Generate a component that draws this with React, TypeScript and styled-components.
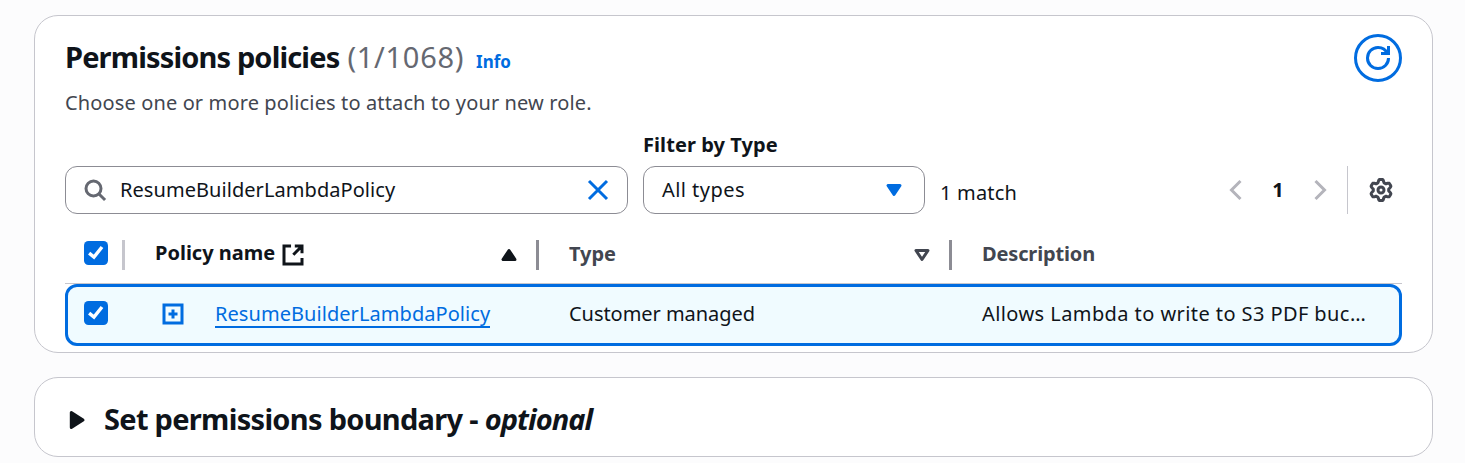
import React from "react";
import styled, { createGlobalStyle } from "styled-components";

const GlobalStyle = createGlobalStyle`
  *, *::before, *::after { box-sizing: border-box; }
  body {
    margin: 0;
    background: #fcfcfd;
    color: #0f141a;
    font-family: "Noto Sans", "Open Sans", sans-serif;
    font-size: 20px;
    line-height: 30px;
  }
`;

const Page = styled.main`
  display: flex;
  flex-direction: column;
  gap: 24px;
  height: 463px;
  padding: 15px 32px 6px 34px;
  overflow: hidden;
`;

const Card = styled.section<{ $height: number }>`
  flex: none;
  height: ${(p) => p.$height}px;
  padding: 0 30px;
  background: #fff;
  border: 1px solid #c6c6cd;
  border-radius: 24px;
`;

const Label = styled.span<{ $tracking?: number }>`
  white-space: nowrap;
  letter-spacing: ${(p) => p.$tracking ?? 0}px;
`;

const CardHeader = styled.header`
  display: flex;
  justify-content: space-between;
  align-items: flex-start;
  padding-top: 18px;
`;

const TitleRow = styled.div`
  display: flex;
  align-items: baseline;
  height: 48px;
`;

const Title = styled.h2`
  margin: 0;
  font-size: 29px;
  line-height: 46px;
  font-weight: 700;
  white-space: nowrap;
  letter-spacing: -0.85px;
`;

const Counter = styled.span`
  margin-left: 8px;
  color: #656871;
  font-size: 29px;
  line-height: 46px;
  white-space: nowrap;
  letter-spacing: 0.7px;
`;

const InfoLink = styled.a`
  margin-left: 12px;
  color: #006ce0;
  font-size: 17px;
  font-weight: 700;
`;

const Subtitle = styled.p`
  margin: 6px 0 0;
  color: #424650;
  white-space: nowrap;
  letter-spacing: 0.13px;
`;

const RoundButton = styled.button`
  display: grid;
  place-items: center;
  width: 48px;
  height: 48px;
  padding: 0;
  color: #006ce0;
  background: #fff;
  border: 3px solid #006ce0;
  border-radius: 50%;
`;

const Toolbar = styled.div`
  display: flex;
  align-items: flex-end;
  height: 96px;
`;

const Field = styled.div<{ $width: number }>`
  display: flex;
  align-items: center;
  width: ${(p) => p.$width}px;
  height: 48px;
  padding: 0 17px;
  border: 1px solid #8c8c94;
  border-radius: 12px;

  svg:last-child {
    margin-left: auto;
  }
`;

const SearchField = styled(Field)`
  margin-right: 15px;
  gap: 13px;
`;

const SelectField = styled(Field)`
  padding: 0 18px;
`;

const FilterGroup = styled.label`
  display: flex;
  flex-direction: column;
`;

const FilterLabel = styled.span`
  height: 36px;
  font-weight: 700;
  letter-spacing: 0.08px;
  white-space: nowrap;
`;

const MatchCount = styled.div`
  margin-left: 15px;
  height: 36px;
`;

const Pager = styled.nav`
  display: flex;
  align-items: center;
  margin-left: auto;
  height: 48px;
  color: #b4b4bb;
`;

const PageNumber = styled.span`
  width: 60px;
  color: #0f141a;
  font-weight: 700;
  text-align: center;
`;

const Preferences = styled.div`
  display: flex;
  align-items: center;
  height: 48px;
  margin-left: 15px;
  padding: 0 9px 0 21px;
  color: #424650;
  border-left: 1px solid #c6c6cd;
`;

const columns = "60px 414px 413px 1fr";

const HeadRow = styled.div`
  display: grid;
  grid-template-columns: ${columns};
  align-items: end;
  height: 70px;
  padding-bottom: 13px;
  border-bottom: 1px solid #c6c6cd;
  font-weight: 700;
`;

const HeadCell = styled.div<{ $divider?: string; $muted?: boolean; $inset?: number }>`
  display: flex;
  align-items: center;
  height: 30px;
  padding-left: ${(p) => p.$inset ?? 30}px;
  padding-right: 15px;
  color: ${(p) => (p.$muted ? "#424650" : "#0f141a")};
  border-right: ${(p) => (p.$divider ? `3px solid ${p.$divider}` : "none")};
`;

const HeadCheck = styled.span`
  padding-bottom: 4px;
`;

const HeadLabel = styled(Label)`
  padding-bottom: 2px;
`;

const NameLabel = styled(Label)`
  margin-right: 6px;
  padding-bottom: 4px;
`;

const SortIcon = styled.span`
  display: flex;
  margin-left: auto;
`;

const BodyRow = styled.div`
  display: grid;
  grid-template-columns: 57px 414px 413px 1fr;
  align-items: center;
  height: 62px;
  padding-bottom: 2px;
  background: #f0fbff;
  border: 3px solid #006ce0;
  border-radius: 12px;
`;

const BodyCell = styled.div<{ $inset?: number }>`
  display: flex;
  align-items: center;
  height: 30px;
  padding-left: ${(p) => p.$inset ?? 30}px;
`;

const BodyCheck = styled.span`
  padding-bottom: 2px;
`;

const ExpandIcon = styled.span`
  display: flex;
  margin-right: 30px;
  color: #006ce0;
`;

const PolicyLink = styled.a`
  height: 28px;
  line-height: 28px;
  color: #006ce0;
  border-bottom: 2px solid #006ce0;
  white-space: nowrap;
  letter-spacing: 0.06px;
`;

const Check = styled.span`
  display: block;
  width: 24px;
  height: 24px;
  background: #006ce0;
  border-radius: 4.5px;

  svg {
    display: block;
  }
`;

const Expander = styled.div`
  display: flex;
  align-items: center;
  height: 78px;
  padding-top: 5px;
`;

const BoundaryTitle = styled(Title)`
  margin-left: 15px;
  padding-bottom: 2px;
  letter-spacing: -0.7px;

  i {
    letter-spacing: -0.95px;
  }
`;

const Icon = ({ children, fill = "none" }: { children: React.ReactNode; fill?: string }) => (
  <svg width="24" height="24" viewBox="0 0 16 16" fill={fill} stroke="currentColor" strokeWidth="2">
    {children}
  </svg>
);

const Checkbox = () => (
  <Check role="checkbox" aria-checked="true">
    <svg width="24" height="24" viewBox="0 0 14 14" fill="none" stroke="#fff" strokeWidth="2">
      <polyline points="3,7.1 5.8,9.4 10.5,3.5" />
    </svg>
  </Check>
);

// Outline of a cog with six wide, rounded teeth, one of them pointing up.
const gearPoints = Array.from({ length: 120 }, (_, i) => {
  const angle = (i * Math.PI) / 60;
  const tooth = Math.max(-1, Math.min(1, -1.6 * Math.cos(6 * angle) + 0.2));
  const radius = 6.1 + 0.95 * tooth;
  return `${(8 + radius * Math.cos(angle)).toFixed(2)},${(8 + radius * Math.sin(angle)).toFixed(2)}`;
}).join(" ");

export default function App() {
  return (
    <>
      <GlobalStyle />
      <Page>
        <Card $height={338}>
          <CardHeader>
            <div>
              <TitleRow>
                <Title>Permissions policies</Title>
                <Counter>(1/1068)</Counter>
                <InfoLink>Info</InfoLink>
              </TitleRow>
              <Subtitle>Choose one or more policies to attach to your new role.</Subtitle>
            </div>
            <RoundButton aria-label="Refresh">
              <Icon>
                <path d="M10 5h5V0M15 8a6.957 6.957 0 0 1-7 7 6.957 6.957 0 0 1-7-7 6.957 6.957 0 0 1 7-7 6.87 6.87 0 0 1 6.3 4" />
              </Icon>
            </RoundButton>
          </CardHeader>

          <Toolbar>
            <SearchField $width={563}>
              <Icon>
                <circle cx="7" cy="7" r="5" stroke="#656871" />
                <path d="m10.5 10.5 4.2 4.2" stroke="#656871" />
              </Icon>
              <Label $tracking={0.06}>ResumeBuilderLambdaPolicy</Label>
              <Icon>
                <path d="m2 2 12 12M14 2 2 14" stroke="#006ce0" />
              </Icon>
            </SearchField>
            <FilterGroup>
              <FilterLabel>Filter by Type</FilterLabel>
              <SelectField $width={282}>
                <Label $tracking={0.45}>All types</Label>
                <Icon fill="#006ce0">
                  <path d="M4 5h8l-4 6-4-6z" stroke="#006ce0" strokeLinejoin="round" />
                </Icon>
              </SelectField>
            </FilterGroup>
            <MatchCount>
              <Label $tracking={0.2}>1 match</Label>
            </MatchCount>
            <Pager>
              <Icon>
                <path d="M11 2 5 8l6 6" />
              </Icon>
              <PageNumber>1</PageNumber>
              <Icon>
                <path d="m5 2 6 6-6 6" />
              </Icon>
            </Pager>
            <Preferences>
              <Icon>
                <circle cx="8" cy="8" r="2" />
                <polygon points={gearPoints} strokeLinejoin="round" />
              </Icon>
            </Preferences>
          </Toolbar>

          <HeadRow>
            <HeadCell $divider="#c6c6cd" $inset={19}>
              <HeadCheck>
                <Checkbox />
              </HeadCheck>
            </HeadCell>
            <HeadCell $divider="#8c8c94">
              <NameLabel $tracking={0}>Policy name</NameLabel>
              <Icon>
                <path d="M9.2 2H14v4.8M8.2 7.8 14 2M14 10v4H2V2h4.7" />
              </Icon>
              <SortIcon>
                <Icon fill="currentColor">
                  <path d="M4 11h8L8 5l-4 6z" strokeLinejoin="round" />
                </Icon>
              </SortIcon>
            </HeadCell>
            <HeadCell $divider="#8c8c94" $muted>
              <HeadLabel $tracking={-0.05}>Type</HeadLabel>
              <SortIcon>
                <Icon>
                  <path d="M4 5h8l-4 6-4-6z" strokeLinejoin="round" />
                </Icon>
              </SortIcon>
            </HeadCell>
            <HeadCell $muted>
              <HeadLabel $tracking={-0.15}>Description</HeadLabel>
            </HeadCell>
          </HeadRow>
          <BodyRow>
            <BodyCell $inset={16}>
              <BodyCheck>
                <Checkbox />
              </BodyCheck>
            </BodyCell>
            <BodyCell $inset={36}>
              <ExpandIcon>
                <Icon>
                  <path d="M2 2h12v12H2zM8 5v6M5 8h6" />
                </Icon>
              </ExpandIcon>
              <PolicyLink>ResumeBuilderLambdaPolicy</PolicyLink>
            </BodyCell>
            <BodyCell>
              <Label $tracking={-0.05}>Customer managed</Label>
            </BodyCell>
            <BodyCell>
              <Label $tracking={0.42}>Allows Lambda to write to S3 PDF buc…</Label>
            </BodyCell>
          </BodyRow>
        </Card>

        <Card $height={80}>
          <Expander>
            <Icon fill="currentColor">
              <path d="M4.2 3v10L12 8z" strokeLinejoin="round" />
            </Icon>
            <BoundaryTitle>
              Set permissions boundary - <i>optional</i>
            </BoundaryTitle>
          </Expander>
        </Card>
      </Page>
    </>
  );
}
